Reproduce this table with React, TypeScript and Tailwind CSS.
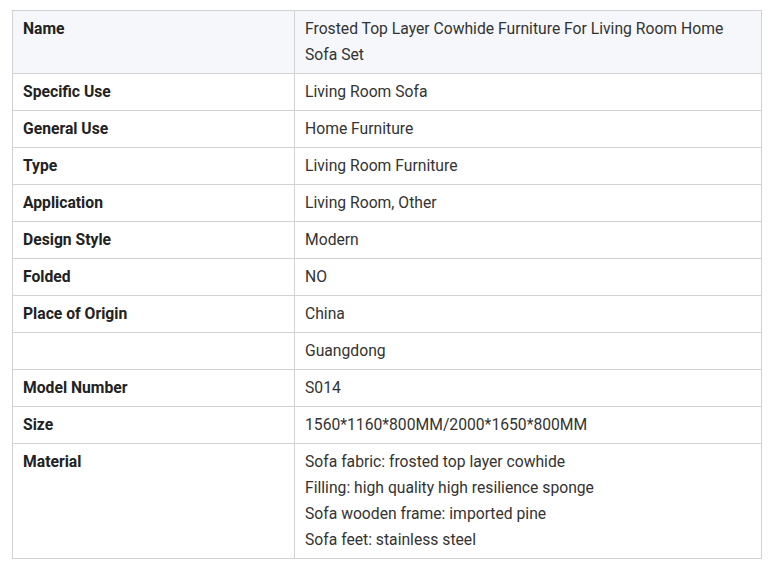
const rows: { label: string; value: string[] }[] = [
  { label: 'Name', value: ['Frosted Top Layer Cowhide Furniture For Living Room Home Sofa Set'] },
  { label: 'Specific Use', value: ['Living Room Sofa'] },
  { label: 'General Use', value: ['Home Furniture'] },
  { label: 'Type', value: ['Living Room Furniture'] },
  { label: 'Application', value: ['Living Room, Other'] },
  { label: 'Design Style', value: ['Modern'] },
  { label: 'Folded', value: ['NO'] },
  { label: 'Place of Origin', value: ['China'] },
  { label: '', value: ['Guangdong'] },
  { label: 'Model Number', value: ['S014'] },
  { label: 'Size', value: ['1560*1160*800MM/2000*1650*800MM'] },
  {
    label: 'Material',
    value: [
      'Sofa fabric: frosted top layer cowhide',
      'Filling: high quality high resilience sponge',
      'Sofa wooden frame: imported pine',
      'Sofa feet: stainless steel',
    ],
  },
];

export default function App() {
  return (
    <div className="bg-white min-h-screen pt-[10px] pl-[12px]" style={{ fontFamily: 'Roboto, "Liberation Sans", sans-serif' }}>
      <table className="w-[750px] border-collapse text-[15.7px] leading-[26px]">
        <tbody>
          {rows.map((row, i) => (
            <tr key={i} className={i === 0 ? 'bg-[#f5f7fa]' : ''}>
              <td className="w-[282px] border border-[#d2d2d2] px-[10px] py-[5px] align-top font-bold text-[#222]">
                {row.label}
              </td>
              <td className="border border-[#d2d2d2] px-[10px] py-[5px] align-top text-[#333]">
                {row.value.map((line, j) => (
                  <div key={j}>{line}</div>
                ))}
              </td>
            </tr>
          ))}
        </tbody>
      </table>
    </div>
  );
}
